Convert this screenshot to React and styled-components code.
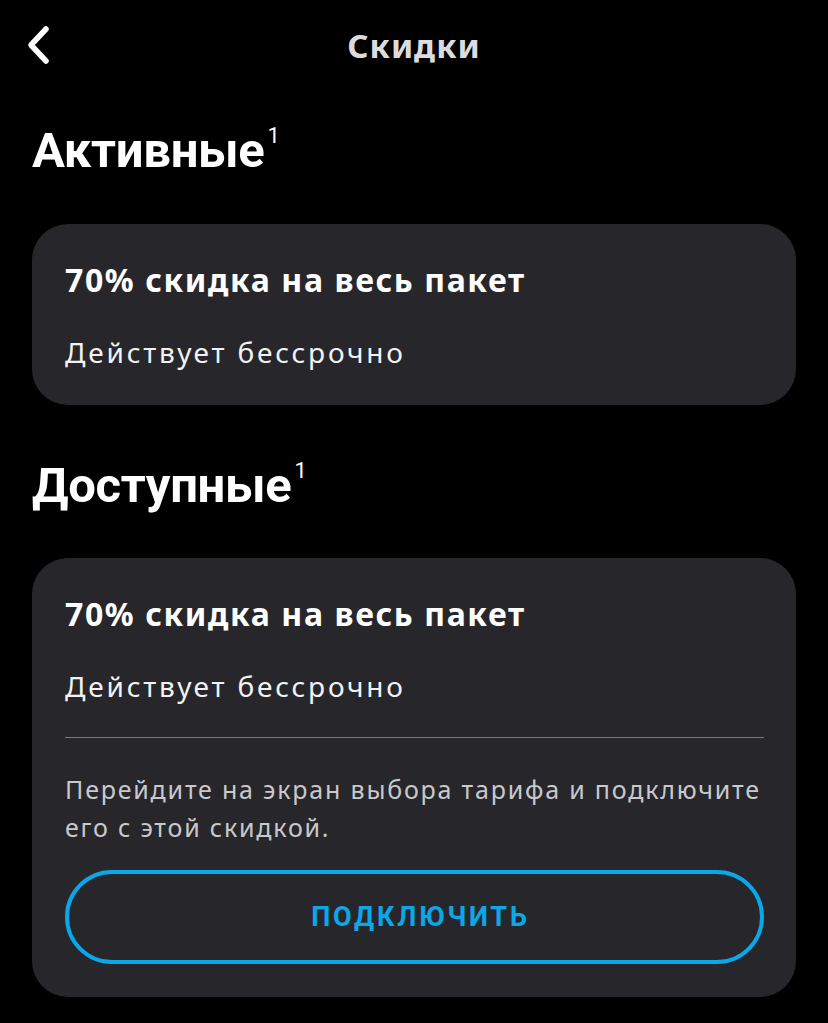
import React from 'react';
import styled, { createGlobalStyle } from 'styled-components';

const GlobalStyle = createGlobalStyle`
  html, body {
    margin: 0;
    padding: 0;
    background: #000;
  }
  body {
    font-family: "Noto Sans", "Open Sans", sans-serif;
    color: #fff;
  }
`;

const Page = styled.div`
  width: 828px;
  min-height: 1023px;
  background: #000;
  padding: 0 32px 26px;
  box-sizing: border-box;
`;

const TopBar = styled.header`
  height: 90px;
  display: grid;
  grid-template-columns: 60px 1fr 60px;
  align-items: center;
  margin: 0 -32px;
  padding: 0 16px;
`;

const BackButton = styled.button`
  background: none;
  border: 0;
  padding: 0;
  width: 44px;
  height: 44px;
  display: flex;
  align-items: center;
  justify-content: center;
  cursor: pointer;
`;

const Title = styled.h1`
  margin: 0;
  text-align: center;
  font-family: "Noto Sans", sans-serif;
  font-weight: 700;
  font-size: 33px;
  letter-spacing: 1px;
  color: #dcdcde;
`;

const SectionHeading = styled.h2`
  margin: ${(p) => p.$top}px 0 0;
  font-family: Roboto, "Liberation Sans", sans-serif;
  font-weight: 700;
  font-size: 49px;
  line-height: 60px;
  letter-spacing: -0.3px;
  color: #fff;

  sup {
    font-size: 22px;
    font-weight: 400;
    color: #fff;
    vertical-align: top;
    line-height: 30px;
    margin-left: 3px;
  }
`;

const Card = styled.section`
  margin-top: ${(p) => p.$top}px;
  background: #27272b;
  border-radius: 36px;
  padding: 36px 32px 33px 33px;
`;

const CardTitle = styled.div`
  font-weight: 700;
  font-size: 32px;
  line-height: 40px;
  letter-spacing: 1.6px;
`;

const CardNote = styled.div`
  margin-top: 32px;
  font-size: 28px;
  line-height: 40px;
  letter-spacing: 2.8px;
  color: #f2f2f2;
`;

const Divider = styled.hr`
  margin: 31px 0 0;
  border: 0;
  height: 1px;
  background: #7a7a7e;
`;

const Hint = styled.p`
  margin: 32px 0 0;
  font-size: 25px;
  line-height: 38px;
  letter-spacing: 1.8px;
  color: #c9c9cc;
`;

const ConnectButton = styled.button`
  margin-top: 24px;
  width: 100%;
  height: 94px;
  border: 4px solid #0aa8e8;
  border-radius: 48px;
  background: transparent;
  color: #0aa8e8;
  font-family: Roboto, "Liberation Sans", sans-serif;
  font-weight: 700;
  font-size: 27px;
  letter-spacing: 2.8px;
  padding-left: 18px;
  cursor: pointer;
`;

const Chevron = () => (
  <svg width="26" height="40" viewBox="0 0 26 40" fill="none">
    <path d="M21 4 L6 20 L21 36" stroke="#fff" strokeWidth="5.5" strokeLinecap="round" strokeLinejoin="round" />
  </svg>
);

const DiscountCard = ({ top, children }) => (
  <Card $top={top}>
    <CardTitle>70% скидка на весь пакет</CardTitle>
    <CardNote>Действует бессрочно</CardNote>
    {children}
  </Card>
);

export default function App() {
  return (
    <>
      <GlobalStyle />
      <Page>
        <TopBar>
          <BackButton aria-label="Назад">
            <Chevron />
          </BackButton>
          <Title>Скидки</Title>
          <span />
        </TopBar>

        <SectionHeading $top={31}>Активные<sup>1</sup></SectionHeading>
        <DiscountCard top={43} />

        <SectionHeading $top={51}>Доступные<sup>1</sup></SectionHeading>
        <DiscountCard top={42}>
          <Divider />
          <Hint>
            Перейдите на экран выбора тарифа и подключите
            <br />
            его с этой скидкой.
          </Hint>
          <ConnectButton>ПОДКЛЮЧИТЬ</ConnectButton>
        </DiscountCard>
      </Page>
    </>
  );
}
